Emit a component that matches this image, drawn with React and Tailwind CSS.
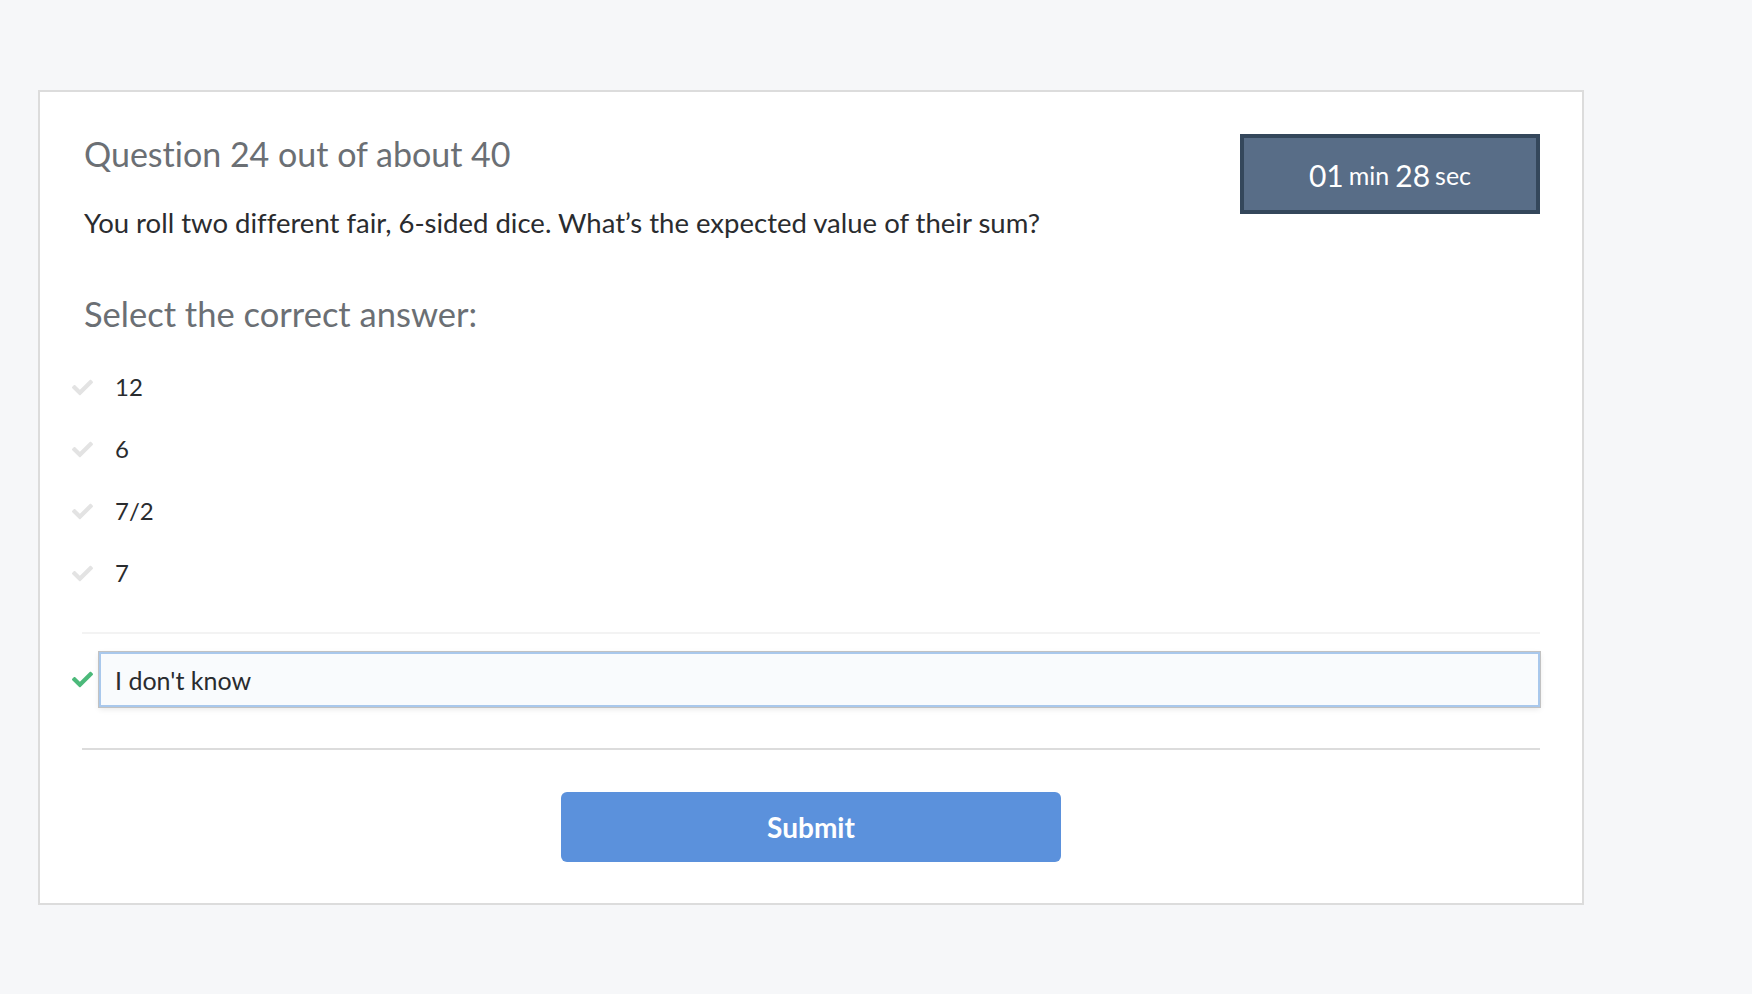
import React from "react";
import { FaCheck } from "react-icons/fa";

const options = ["12", "6", "7/2", "7"];

function Timer() {
  return (
    <div className="w-[300px] h-[80px] shrink-0 border-4 border-[#34475b] bg-[#586d87] flex items-center justify-center text-white pt-[2px]">
      <span className="text-[30px] leading-none">01</span>
      <span className="text-[25px] leading-none ml-[5px]">min</span>
      <span className="text-[30px] leading-none ml-[6px]">28</span>
      <span className="text-[25px] leading-none ml-[5px]">sec</span>
    </div>
  );
}

export default function App() {
  return (
    <div
      className="min-h-screen bg-[#f6f7f9] pt-[90px] pb-[89px] [font-variant-ligatures:none]"
      style={{ fontFamily: "Lato, 'Open Sans', sans-serif" }}
    >
      <div className="ml-[38px] w-[1546px] bg-white border-2 border-[#dcdcdc] px-[42px] pt-[42px] pb-[41px]">
        {/* header */}
        <div className="flex justify-between items-start">
          <div className="pl-[2px]">
            <h1 className="text-[34px] leading-[1.2] text-[#6b6f74]">
              Question 24 out of about 40
            </h1>
            <p className="mt-[31px] text-[27.5px] leading-[1.2] text-[#2a2c2f]">
              You roll two different fair, 6-sided dice. What’s the expected value of their sum?
            </p>
          </div>
          <Timer />
        </div>

        <h2 className="mt-[54px] pl-[2px] text-[34.5px] leading-[1.2] text-[#6b6f74]">
          Select the correct answer:
        </h2>

        <ul className="mt-[22px]">
          {options.map((o) => (
            <li key={o} className="h-[62px] flex items-center -ml-[10px]">
              <FaCheck className="w-[21px] h-[21px] text-[#e3e3e3]" />
              <span className="ml-[22px] text-[24px] leading-[1.2] text-[#2a2c2f]">{o}</span>
            </li>
          ))}
        </ul>

        <div className="mt-[28px] h-[2px] bg-[#f3f3f3]" />

        <div className="mt-[18px] flex items-center -ml-[10px]">
          <FaCheck className="w-[21px] h-[21px] text-[#4cb97a]" />
          <div className="ml-[6px] flex-1 h-[55px] flex items-center bg-[#f9fbfd] border-2 border-[#a9c8ec] ring-1 ring-[#c2c2c2] shadow-[0_2px_6px_rgba(0,0,0,0.1)] pl-[14px]">
            <span className="text-[25px] leading-[1.2] text-[#2a2c2f]">I don't know</span>
          </div>
        </div>

        <div className="mt-[41px] h-[2px] bg-[#dcdcdc]" />

        <div className="mt-[42px] flex justify-center">
          <button className="w-[500px] h-[70px] rounded-md bg-[#5b91dc] text-white text-[28px] font-bold">
            Submit
          </button>
        </div>
      </div>
    </div>
  );
}
